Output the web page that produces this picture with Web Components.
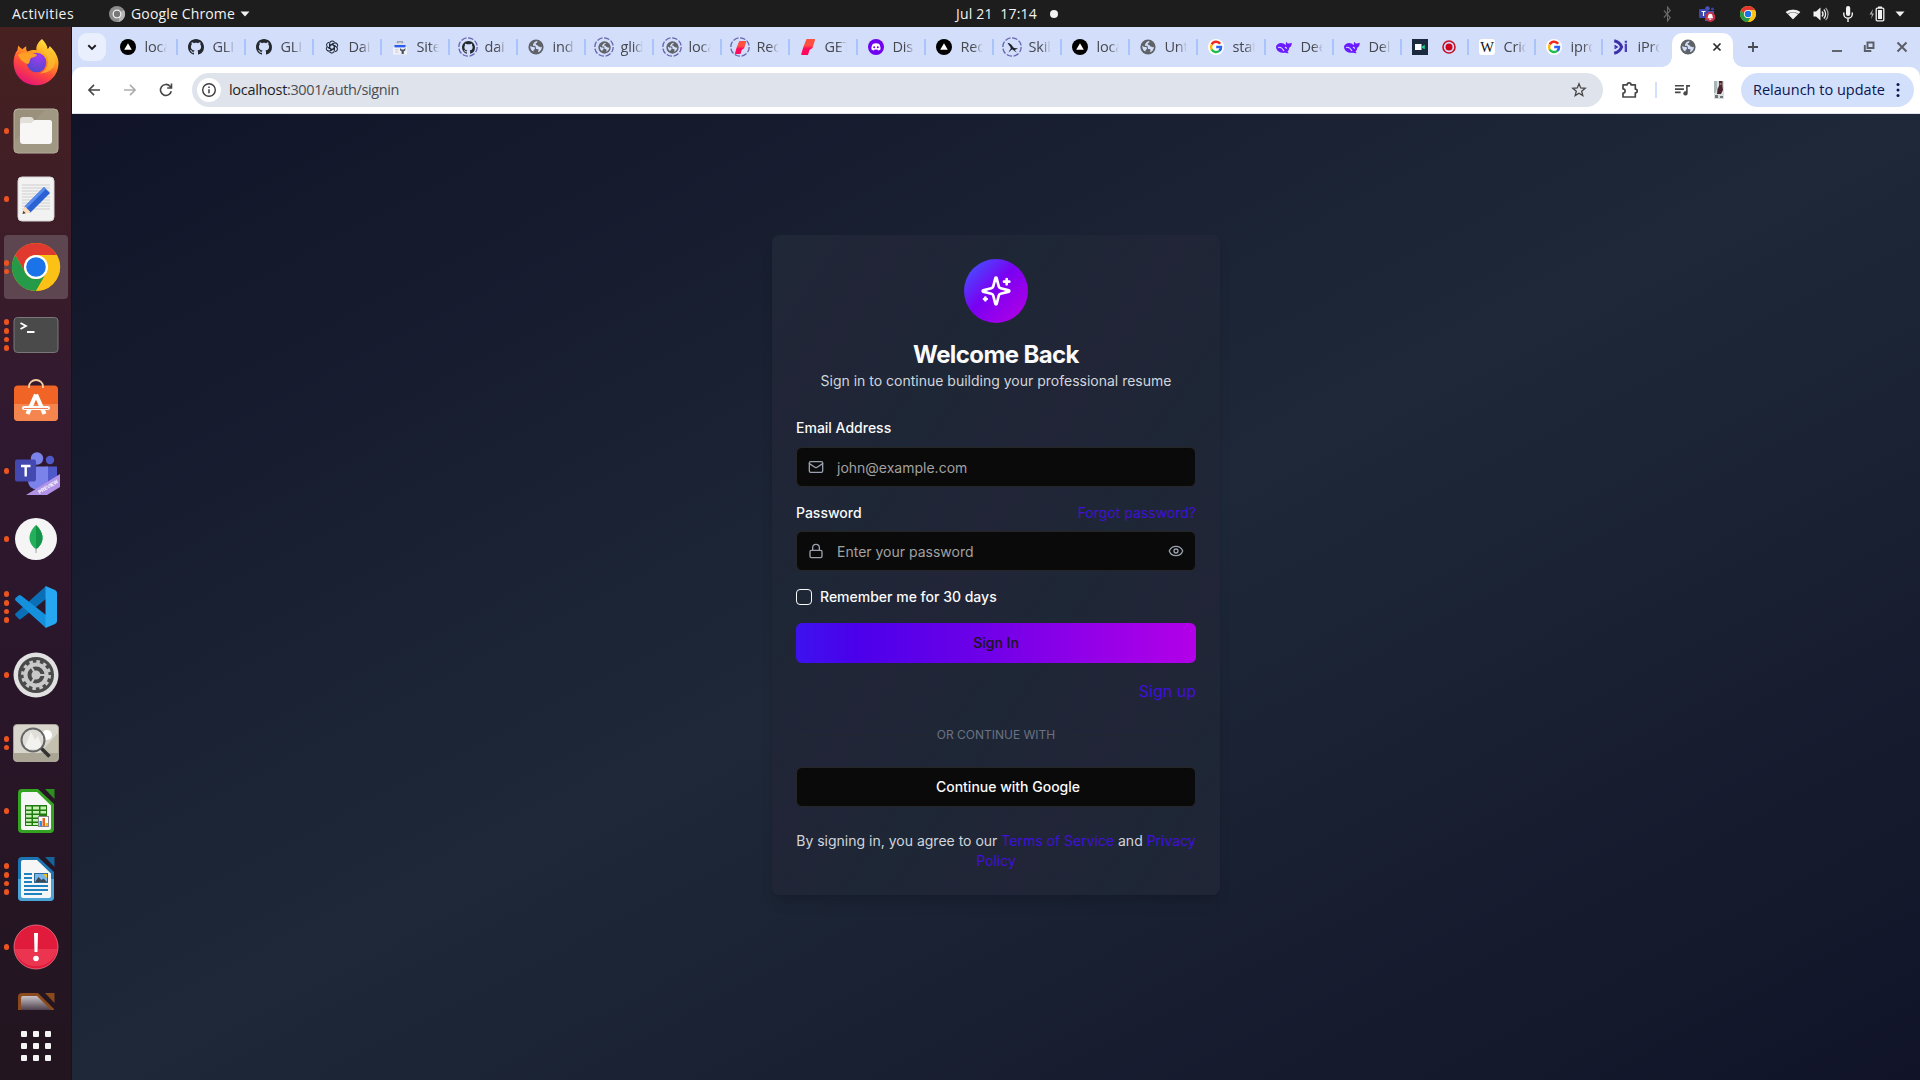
<!DOCTYPE html>
<html lang="en">
<head>
<meta charset="utf-8">
<title>Sign in</title>
<style>
html,body{margin:0;padding:0;width:1920px;height:1080px;overflow:hidden;background:#1d1d1d}
body{font-family:"Open Sans","Noto Sans",sans-serif}
</style>
</head>
<body>
<desk-top></desk-top>
<script>
const ICONS = {
  // --- browser favicons ---
  vercel:['0 0 16 16','<circle cx="8" cy="8" r="8" fill="#000"/><path d="M8 4.2 11.8 10.8H4.2Z" fill="#fff"/>'],
  github:['0 0 16 16','<path fill="#24292f" d="M8 0C3.58 0 0 3.58 0 8c0 3.54 2.29 6.53 5.47 7.59.4.07.55-.17.55-.38 0-.19-.01-.82-.01-1.49-2.01.37-2.53-.49-2.69-.94-.09-.23-.48-.94-.82-1.13-.28-.15-.68-.52-.01-.53.63-.01 1.08.58 1.23.82.72 1.21 1.87.87 2.33.66.07-.52.28-.87.51-1.07-1.78-.2-3.64-.89-3.64-3.95 0-.87.31-1.59.82-2.15-.08-.2-.36-1.02.08-2.12 0 0 .67-.21 2.2.82.64-.18 1.32-.27 2-.27s1.36.09 2 .27c1.53-1.04 2.2-.82 2.2-.82.44 1.1.16 1.92.08 2.12.51.56.82 1.27.82 2.15 0 3.07-1.87 3.75-3.65 3.95.29.25.54.73.54 1.48 0 1.07-.01 1.93-.01 2.2 0 .21.15.46.55.38A8.01 8.01 0 0 0 16 8c0-4.42-3.58-8-8-8Z"/>'],
  gpt:['0 0 16 16','<g fill="none" stroke="#222b38" stroke-width="1.15" transform="translate(8 8) scale(.9) translate(-8 -8)">'+[0,60,120,180,240,300].map(a=>`<path transform="rotate(${a} 8 8)" d="M5.4 9.6V4.2a2.9 2.9 0 0 1 5-2 2.9 2.9 0 0 1 .3.5M8 5.1l4.2 2.4"/>`).join('')+'</g>'],
  site:['0 0 16 16','<path d="M5.500 4V2.800h5V4" fill="none" stroke="#8a8f98" stroke-width="1.200"/><rect x="2" y="4" width="12" height="4" rx="1" fill="#d9dde5"/><rect x="1" y="8" width="14" height="7.500" fill="#f1f2f5"/><rect x="2.500" y="6" width="11" height="2.400" fill="#2f5cf0"/><path d="M8 9v2.200l1.600 1.200V15h2.200v-2.600l1.600-1.200V9l-1.600 1.500H9.600Z" fill="#4b5563"/><path d="M3 10.200h3.500v1H3zM3 12.500h3.500v1H3z" fill="#c6cbd5"/>'],
  globe:['0 0 16 16','<circle cx="8" cy="8" r="7.600" fill="#5f6368"/><path fill="#d3defb" d="M2.300 6.800c1.700 1.400 2.200 1.300 3.900 1.300.9.5.8 1.400.6 2.100-.9.400-1.400 1-1.300 2.200C3.500 11.900 2 9.500 2.300 6.800ZM9.400 2c.1 1.200-.3 2-1.600 2.300-.5.9.1 1.700 1.300 1.600.9.500 1 1.700 2.200 1.600.6 1 1.500.8 2.500.3.300 2.400-1.500 4.800-3.800 5.500-.2-.9.800-1.500.5-2.800-.900-.7-1.900-.3-2.500-1.100-.4-1.200.1-2-.900-2.500-.8-.3-1.400.3-2.200-.3C5 4.400 6.800 2.400 9.400 2Z"/>'],
  reddish:['0 0 16 16','<defs><linearGradient id="a" x2="0" y2="1"><stop offset=".4" stop-color="#ff4f40"/><stop offset=".6" stop-color="#ff0a5c"/></linearGradient></defs><path d="M6.500 0H14.300Q15.200 0 15 1L12.500 9 9.500 11 8 16H2Q1 16 1.200 15L3.500 7.500Z" fill="url(#a)"/>'],
  discord:['0 0 16 16','<circle cx="8" cy="8" r="8" fill="#7000f0"/><path fill="#fff" d="M5 4.800c2-.7 4-.7 6 0 1.200 1.800 1.700 3.500 1.500 5.600-.9.700-1.700 1-2.500 1.100l-.6-.9c-.9.200-1.900.2-2.800 0l-.6.900c-.9-.2-1.700-.5-2.500-1.100-.2-2.200.3-3.900 1.500-5.600Z"/><circle cx="6.200" cy="8.300" r="1" fill="#7000f0"/><circle cx="9.800" cy="8.300" r="1" fill="#7000f0"/>'],
  skill:['0 0 16 16','<path d="M2 2c4 1 6 4 6.500 5.500C10 9 12 9.500 14.500 8.500 13 11 10 11 7.500 10L3 14l3-5C5 6 3 5 2 2ZM9 9l4.500 5.500-6-4.500Z" fill="#1b1f2a"/>'],
  google:['0 0 16 16','<circle cx="8" cy="8" r="8" fill="#fff"/><g fill="none" stroke-width="2.500"><path d="M12.200 4.700A5 5 0 0 0 3.700 5.500" stroke="#f02b1d"/><path d="M3.700 5.500a5 5 0 0 0 0 5" stroke="#fbbc05"/><path d="M3.700 10.500a5 5 0 0 0 7.600 1.400" stroke="#1fbf4b"/><path d="M11.300 11.900A4.800 4.800 0 0 0 13 8H8.200" stroke="#2a62f5"/></g>'],
  whale:['0 0 16 16','<path fill="#6b1bff" d="M0 7.500C1 4.500 4.500 3 7.500 4.500c1.200.6 1.700 1.600 2.700 1.500-.6-1-.5-2.200.3-3.200.2 1.300 1 1.700 1.900 1.800 1.100.1 2.100-.3 3.300-.8.200 2.700-.8 4.300-2.500 5 0 1.700-.8 3.200-1.800 4l1.300 1.200c-1.400.4-2.500.1-3.300-.3C5 14.500 0 12.500 0 7.500Z"/><path d="M2 8.500c2-.8 4.500 1 6 3.500M9 8l2 1.500" stroke="#d3defb" stroke-width="1.100" fill="none"/>'],
  meet:['0 0 16 16','<rect width="16" height="16" fill="#1b2a3c"/><rect x="3" y="5" width="6.500" height="6" fill="#fff"/><path d="M10 7.500 12.800 5.800v4.400L10 9Z" fill="#1bd196"/>'],
  record:['0 0 16 16','<circle cx="8" cy="8" r="6" fill="none" stroke="#c8102a" stroke-width="1.600"/><circle cx="8" cy="8" r="3.500" fill="#d0021b"/>'],
  ipr:['0 0 16 16','<path d="M1.200 1.800C4.500 2.500 7.500 5 8.600 8 7.500 11 4.500 13.500 1.200 14.200" fill="none" stroke="#3c2fa8" stroke-width="3"/><path d="M1.500 6.500 4 8l-2.500 1.500" fill="none" stroke="#3c2fa8" stroke-width="1.500"/><path d="M11.700 4.800h2.300V13h-2.300zM11.700 1.800h2.300v2h-2.300z" fill="#4a3fc0"/>'],
  wiki:['0 0 16 16','<rect width="16" height="16" rx="3" fill="#fff"/><text x="8" y="13" text-anchor="middle" font-family="Liberation Serif" font-size="14.500" fill="#111">W</text>'],
  // --- browser controls ---
  chev:['0 0 12 12','<path d="M2.300 4.300 6 7.900l3.700-3.600" fill="none" stroke="#1b1b1f" stroke-width="1.900"/>'],
  back:['0 0 16 16','<path d="M14 8H3.200M8 2.900 2.900 8 8 13.100" fill="none" stroke="#474747" stroke-width="1.600"/>'],
  fwd:['0 0 16 16','<path d="M2 8H12.800M8 2.900 13.100 8 8 13.100" fill="none" stroke="#adadad" stroke-width="1.600"/>'],
  reload:['0 0 16 16','<path d="M13.300 9.200A5.500 5.500 0 1 1 12 4.200L13.300 5.600M13.500 1.600V6H9.200" fill="none" stroke="#474747" stroke-width="1.600"/>'],
  info:['0 0 16 16','<circle cx="8" cy="8" r="6.300" fill="none" stroke="#3c3c40" stroke-width="1.400"/><path d="M8 7.200v4M8 4.600V6" stroke="#3c3c40" stroke-width="1.500"/>'],
  star:['0 0 16 16','<path d="M8 1.800 9.700 6l4.500.3-3.500 2.900 1.100 4.400L8 11.200l-3.800 2.400 1.100-4.400L1.800 6.300 6.300 6Z" fill="none" stroke="#474747" stroke-width="1.300"/>'],
  puzzle:['0 0 18 18','<path d="M2 3.800h4.200a1.900 1.900 0 0 1 3.800 0h4.300v4.300a1.900 1.900 0 0 1 0 3.800V16H2v-4a2 2 0 0 0 0-4.200Z" fill="none" stroke="#474747" stroke-width="1.700" stroke-linejoin="round"/>'],
  queue:['0 0 18 18','<path d="M1 4h9.500M1 7.500h9.500M1 11h6" stroke="#474747" stroke-width="1.700"/><path d="M12.800 3.200H17v1.800h-2.500v7a2.300 2.300 0 1 1-1.700-2.200Z" fill="#474747"/>'],
  avatar:['0 0 10 18','<rect width="10" height="18" fill="#d9dfe0"/><path d="M5 0h3.500v5L9 9l-2 4H3l.5-5L5 5Z" fill="#4a2630"/><path d="M0 0h3v7L1.500 12H0Z" fill="#a9b6b8"/><path d="M1 14h3v3H1zM6 15h3v2H6z" fill="#72777a"/><path d="M5.500 2h2v2h-2z" fill="#a77267"/>'],
  dots:['0 0 4 16','<g fill="#0b1550"><circle cx="2" cy="2.500" r="1.500"/><circle cx="2" cy="8" r="1.500"/><circle cx="2" cy="13.500" r="1.500"/></g>'],
  x:['0 0 10 10','<path d="m1.500 1.500 7 7m0-7-7 7" stroke="#2a2a2e" stroke-width="1.700"/>'],
  plus:['0 0 12 12','<path d="M6 1v10M1 6h10" stroke="#474a50" stroke-width="1.800"/>'],
  min:['0 0 12 12','<path d="M1 10h10" stroke="#5a5e66" stroke-width="1.900"/>'],
  restore:['0 0 12 12','<path d="M4.500 1.500h6v5.500h-6zM1.800 4v6h6.500" fill="none" stroke="#5a5e66" stroke-width="1.900"/>'],
  close:['0 0 12 12','<path d="m1.500 1.500 9 9m0-9-9 9" stroke="#5a5e66" stroke-width="2"/>'],
  // --- system tray ---
  chromegray:['0 0 16 16','<circle cx="8" cy="8" r="8" fill="#8c8c8c"/><path d="M8 8 15 4a8 8 0 0 1-7 12Z" fill="#b5b5b5"/><circle cx="8" cy="8" r="3.800" fill="#777" stroke="#eee" stroke-width="1.300"/><path d="M9 12v3.500" stroke="#666"/>'],
  tri:['0 0 10 6','<path d="M.5.500h9L5 5.500Z" fill="#f2f2f2"/>'],
  dot:['0 0 8 8','<circle cx="4" cy="4" r="4" fill="#f2f2f2"/>'],
  bt:['0 0 10 16','<path d="m1 4.500 7 7L5 15V1l3 3.500-7 7" fill="none" stroke="#6a6a6a" stroke-width="1.200"/>'],
  tray:['0 0 16 16','<circle cx="8.500" cy="2.500" r="2.300" fill="#4b53bc"/><circle cx="13.500" cy="3" r="1.600" fill="#3940a5"/><path d="M6 5h9v6l-4 4H6Z" fill="#4b53bc"/><rect y="3" width="9" height="9" rx="1" fill="#3d46b0"/><path d="M2.500 5.500h4M4.500 5.500v4.500" stroke="#fff" stroke-width="1.200"/><circle cx="11.300" cy="11" r="5" fill="#c4314b"/><path d="M11.300 7.800c1.600 0 2.200 1 2.200 2.400l.6 2H8.500l.6-2c0-1.400.6-2.400 2.200-2.400Zm-1 5h2v.9h-2z" fill="#fff"/>'],
  chrome:['0 0 48 48','<circle cx="24" cy="24" r="24" fill="#fbbc04"/><path d="M3.200 12A24 24 0 0 1 44.800 12H24A12 12 0 0 0 13.600 30Z" fill="#e03a30"/><path d="M3.200 12 13.600 30A12 12 0 0 0 34.400 30L24 48A24 24 0 0 1 3.200 12Z" fill="#259a48"/><path d="M24 12H44.800A24 24 0 0 1 24 48L34.400 30Z" fill="#fbc116"/><circle cx="24" cy="24" r="12" fill="#fff"/><circle cx="24" cy="24" r="9.800" fill="#1a73e8"/>'],
  wifi:['0 0 16 14','<path d="M8 13.500.5 4.500a11.500 11.500 0 0 1 15 0Z" fill="#f2f2f2" opacity=".35"/><path d="M.8 4.800a11 11 0 0 1 14.400 0l-1.500 1.900a9 9 0 0 0-11.400 0ZM8 13.200l5-6a8 8 0 0 0-10 0Z" fill="#f2f2f2"/>'],
  sound:['0 0 16 16','<path d="M.5 5.500H3L7.500 1.500v13L3 10.500H.5Z" fill="#f2f2f2"/><path d="M9 5.500a3.800 3.800 0 0 1 0 5M10.800 3.500a6.500 6.500 0 0 1 0 9" fill="none" stroke="#f2f2f2" stroke-width="1.300"/><path d="M12.600 1.800a9 9 0 0 1 0 12.400" fill="none" stroke="#aaa" stroke-width="1.200"/>'],
  mic:['0 0 10 16','<rect x="3" y="0" width="4.200" height="10" rx="2.100" fill="#f2f2f2"/><path d="M.8 6.500V8a4.200 4.200 0 0 0 8.500 0V6.500M5 12.500V16" fill="none" stroke="#f2f2f2" stroke-width="1.400"/>'],
  batt:['0 0 16 16','<path d="m4 3-3.500 5.500H3L2 13l3-5.500H3Z" fill="#aaa"/><path d="M9 .5h4V2H9z" fill="#f2f2f2"/><rect x="7.200" y="2.200" width="7.600" height="12.600" rx="1" fill="none" stroke="#f2f2f2" stroke-width="1.300"/><path d="M9 4h4v9H9z" fill="#f2f2f2"/>'],
  // --- form ---
  sparkles:['0 0 24 24','<g fill="none" stroke="#fff" stroke-width="2" stroke-linecap="round" stroke-linejoin="round"><path d="M9.937 15.500A2 2 0 0 0 8.500 14.063l-6.135-1.582a.5.5 0 0 1 0-.962L8.500 9.936A2 2 0 0 0 9.937 8.500l1.582-6.135a.5.5 0 0 1 .963 0L14.063 8.500A2 2 0 0 0 15.500 9.937l6.135 1.581a.5.5 0 0 1 0 .964L15.500 14.063a2 2 0 0 0-1.437 1.437l-1.582 6.135a.5.5 0 0 1-.963 0z"/><path d="M20 3v4M22 5h-4M4 17v2M5 18H3"/></g>'],
  mail:['0 0 24 24','<g fill="none" stroke="#99a1af" stroke-width="2" stroke-linecap="round" stroke-linejoin="round"><rect width="20" height="16" x="2" y="4" rx="2"/><path d="m22 7-8.970 5.700a1.940 1.940 0 0 1-2.060 0L2 7"/></g>'],
  lock:['0 0 24 24','<g fill="none" stroke="#99a1af" stroke-width="2" stroke-linecap="round" stroke-linejoin="round"><rect width="18" height="11" x="3" y="11" rx="2"/><path d="M7 11V7a5 5 0 0 1 10 0v4"/></g>'],
  eye:['0 0 24 24','<g fill="none" stroke="#99a1af" stroke-width="2" stroke-linecap="round" stroke-linejoin="round"><path d="M2.062 12.348a1 1 0 0 1 0-.696 10.750 10.750 0 0 1 19.876 0 1 1 0 0 1 0 .696 10.750 10.750 0 0 1-19.876 0"/><circle cx="12" cy="12" r="3"/></g>'],
  // --- dock launchers, drawn on a 48px grid ---
  firefox:['0 1 48 48','<defs><linearGradient id="f" x1=".8" y1="0" x2=".3" y2="1"><stop offset="0" stop-color="#fff04a"/><stop offset=".35" stop-color="#ffa51e"/><stop offset=".65" stop-color="#ff4a3c"/><stop offset="1" stop-color="#e3127a"/></linearGradient><radialGradient id="g" cx=".6" cy=".2" r=".9"><stop offset="0" stop-color="#a03cf0"/><stop offset="1" stop-color="#4a49c8"/></radialGradient></defs><path d="M30 1c3 3 5.500 7 5.500 10 1-.5 2-2 2.200-3C43 13 46.500 19 46.500 25.500A22.400 22 0 0 1 1.600 25C1.400 20 3 15 5.500 12c0-1.500.3-3 1-4.500 1.200 2 2.500 3 4 3.700 1-1.200 2.500-2.200 3.800-3-.3 2.300 0 4 .8 5.300 3-1.500 7-2 9.500-1.200C23.500 9 26 4 30 1Z" fill="url(#f)"/><ellipse cx="24.500" cy="24.500" rx="9.800" ry="9.800" fill="url(#g)"/><path d="M6 17c4-3 9-3 13-2 2 .5 5 .5 6 2-1 2-4 2.500-6 3-2 3-1 5-3 6-4-1-8-4-10-9Z" fill="#ffa026"/><path d="M31 14c5 3 6 8 4.500 13-1 4-4 7-8 8.500 8 0 15-4 15.500-11.500 0-6-3-10-7-13-1 0-3.500.5-5 3Z" fill="#ffc02e" opacity=".7"/>'],
  files:['0 0 48 48','<rect x="2" y="2" width="44" height="44" rx="4" fill="#9a907c" stroke="#bdb5a2"/><path d="M2 34 34 2h8q4 0 4 4v36q0 4-4 4H6q-4 0-4-4Z" fill="#a79f8b" opacity=".6"/><path d="M8 13q0-3 3-3h8q2 0 3 3h15q3 0 3 3v8H8Z" fill="#e2dfd8"/><path d="M8 19q0-3 3-3h8l4-3h14q3 0 3 3v18q0 3-3 3H11q-3 0-3-3Z" fill="#f8f7f5"/>'],
  editor:['0 0 48 48','<rect x="6" y="2" width="36" height="44" rx="4" fill="#f2f2f2" stroke="#d6d6d6"/><path d="M10 10h28M10 13h28M10 16h28M10 19h28M10 22h28M10 25h28M10 28h28M10 31h28M10 34h28" stroke="#cfcfcf" stroke-width="1"/><path d="m12 32 6 6 20-20-6-6Z" fill="#2a62d4"/><path d="m12 32 20-20 2 2-20 20Z" fill="#5a8cf0"/><path d="m10.500 39 2-8 6.500 6.500Z" fill="#ffdcb8"/><path d="m10.500 39 .8-3.200 2.400 2.400Z" fill="#444"/>'],
  terminal:['0 0 48 48','<rect x="2" y="6.500" width="44" height="35" rx="3.500" fill="#4a4a4a" stroke="#787878"/><path d="m8.500 12 5.500 3-5.500 3M15 21h7.500" fill="none" stroke="#fff" stroke-width="1.800"/>'],
  software:['0 2 48 48','<rect x="2" y="8.500" width="44" height="35.500" rx="4" fill="#f06426"/><path d="M2 27h44v13q0 4-4 4H6q-4 0-4-4Z" fill="#f5854f"/><path d="M17 11V9.500a7 6.500 0 0 1 14 0V11" fill="none" stroke="#f3cfa0" stroke-width="1.800"/><path d="M24 17.500 15.500 37M24 17.500l8.500 19.500" stroke="#fff" stroke-width="4.200" fill="none"/><path d="M12 31h24" stroke="#fff" stroke-width="4" stroke-linecap="round"/><path d="M12 31.500h24" stroke="#e8632c" stroke-width=".8"/>'],
  teams:['0 0 48 48','<g transform="translate(0 3.500)"><circle cx="25" cy="8" r="6.200" fill="#7b83eb"/><circle cx="38" cy="9.500" r="4.200" fill="#5059c9"/><path d="M34 16h11v14q0 6-6 7h-5Z" fill="#5059c9"/><path d="M17 16h19v14q0 9-10 9T16 30Z" fill="#7b83eb"/><rect x="3" y="9" width="21" height="22" rx="2" fill="#4349b0"/><path d="M9 15.500h9.500M13.700 15.500V26" stroke="#fff" stroke-width="2.400"/></g><path d="M14 48 48 27v13L35 48Z" fill="#b292e6"/><text x="27.500" y="47" transform="rotate(-31 27.500 47)" font-family="Liberation Sans" font-weight="700" font-size="5.400" fill="#fff" textLength="22" lengthAdjust="spacingAndGlyphs">PREVIEW</text>'],
  mongo:['0 0 48 48','<circle cx="24" cy="24" r="21" fill="#f5f5f5"/><path d="M24 10c5 5 6.500 9 6.500 13 0 5-3 8.500-6.500 11.500C20.500 31.500 17.500 28 17.500 23c0-4 1.500-8 6.500-13Z" fill="#22b05a"/><path d="M24 10c5 5 6.500 9 6.500 13 0 5-3 8.500-6.500 11.500Z" fill="#16934a"/><path d="M24 33v5" stroke="#a5a5a0" stroke-width="1"/>'],
  vscode:['0 0 48 48','<path d="M34 3v13L9 36q-1.500 1-2.500-.5L3.500 32.500q-1-1 0-2Z" fill="#0b6fb8"/><path d="M34 45V32L9 12.500q-1.500-1-2.500 0L3.500 15q-1 1 0 2.500Z" fill="#1590dd"/><path d="M33.500 3 43 7q2 .8 2 3v28q0 2.200-2 3l-9.500 4Z" fill="#27a7f2"/>'],
  settings:['0 0 48 48','<circle cx="24" cy="24" r="22.500" fill="#e1e1e1"/><circle cx="24" cy="24" r="18" fill="#4a4a4a"/><circle cx="24" cy="24" r="13.500" fill="none" stroke="#c9c9c9" stroke-width="3" stroke-dasharray="3.500 3.570"/><circle cx="24" cy="24" r="10.500" fill="none" stroke="#c9c9c9" stroke-width="4"/><circle cx="24" cy="24" r="4.500" fill="#c9c9c9"/><path d="M24 24h10M24 24l-5-8.700M24 24l-5 8.700" stroke="#c9c9c9" stroke-width="2"/>'],
  viewer:['0 0 48 48','<rect x="1.500" y="5.500" width="45" height="37" rx="3.500" fill="#d8d6cc" stroke="#a8a498"/><path d="M2 34h44v5q0 3-3 3H5q-3 0-3-3Z" fill="#aaa594"/><path d="m28 34 18-20v20Z" fill="#c3c0b0"/><circle cx="35" cy="16" r="5" fill="#fff"/><path d="m12 30 7-17 4 8 3-4 5 13Z" fill="#f4f4f0"/><circle cx="21" cy="21" r="11.500" fill="#eee" fill-opacity=".35" stroke="#666" stroke-width="2"/><path d="m29.500 29.500 8 8" stroke="#333" stroke-width="3.500"/>'],
  calc:['0 0 48 48','<path d="M6 6q0-4 4-4h16L42 17v25q0 4-4 4H10q-4 0-4-4Z" fill="#33a321"/><path d="M9 7q0-2 2-2h14L39 18.500V41q0 2-2 2H11q-2 0-2-2Z" fill="#f6f6f6"/><path d="M33 2h9.500v10Z" fill="#2b8f1c"/><path d="M13 18h22v21H13z" fill="#1f7a12"/><path d="M14 19.500h5.500v3H14zM21 19.500h6v3h-6zM28.500 19.500h5.500v3h-5.500zM14 24h5.500v2.500H14zM21 24h6v2.500h-6zM28.500 24h5.500v2.500h-5.500zM14 28h5.500v2.500H14zM21 28h6v2.500h-6zM14 32h5.500v2.500H14zM21 32h6v2.500h-6zM14 36h5.500v2H14zM21 36h6v2h-6z" fill="#c5f0b0"/><rect x="26.500" y="29.500" width="10" height="10" fill="#fff" stroke="#888"/><path d="M27.500 34h2.500v5h-2.500z" fill="#2a90e0"/><path d="M30.500 31H33v8h-2.500z" fill="#e8641e"/><path d="M33.500 36H36v3h-2.500z" fill="#f0b820"/>'],
  writer:['0 0 48 48','<path d="M6 6q0-4 4-4h16L42 17v25q0 4-4 4H10q-4 0-4-4Z" fill="#1c74b0"/><path d="M6 24h36v18q0 4-4 4H10q-4 0-4-4Z" fill="#4ba3d6"/><path d="M9 7q0-2 2-2h14L39 18.500V41q0 2-2 2H11q-2 0-2-2Z" fill="#f6f6f6"/><path d="M33 2h9.500v10Z" fill="#146399"/><path d="M12 19h8M12 23h8M12 27h8M12 31h24M12 35h24M12 39h18" stroke="#1c82c0" stroke-width="1.800"/><rect x="22.500" y="18.500" width="13" height="9" fill="#78b6e8" stroke="#2b6a9b"/><path d="m23 27 3.500-5 3 3 2-1.500 3.500 3.500Z" fill="#3d4850"/><path d="M31 19h4v4Z" fill="#f5c211"/>'],
  alert:['0 0 48 48','<circle cx="24" cy="24" r="22" fill="#e01b3c" stroke="#f07888" stroke-width=".8"/><path d="M2.500 26h43A22 22 0 0 1 2.500 26Z" fill="#f04058" opacity=".7"/><path d="M22 10h4l-.5 19h-3Z" fill="#fff"/><circle cx="24" cy="35.500" r="2.800" fill="#fff"/>'],
  impress:['0 0 48 48','<defs><linearGradient id="i" x2="0" y2="1"><stop offset="0" stop-color="#c9c3c9"/><stop offset=".38" stop-color="#4a3c48"/></linearGradient></defs><path d="M6 6q0-4 4-4h16L42 18v25H6Z" fill="#8a4a1c"/><path d="M9 7q0-2 2-2h14L39 19v24H9Z" fill="url(#i)"/><path d="M33 2h9.500v10Z" fill="#8a4a1c"/>'],
  apps:['0 0 48 48','<g fill="#f4f4f4">'+[9,21,33].map(y=>[9,21,33].map(x=>`<rect x="${x}" y="${y}" width="6" height="6" rx="1"/>`).join('')).join('')+'</g>']
};

function define(name, html, after){
  customElements.define(name, class extends HTMLElement{
    connectedCallback(){
      if(this.shadowRoot) return;
      const root=this.attachShadow({mode:'open'});
      const t=document.createElement('template');
      t.innerHTML=typeof html==='function'?html(this):html;
      root.append(t.content.cloneNode(true));
      if(after) after(this,root);
    }
  });
}

// <ui-icon name w h>: an inline SVG from the table above
define('ui-icon', el=>{
  const [vb,body]=ICONS[el.getAttribute('name')];
  const w=el.getAttribute('w')||16,h=el.getAttribute('h')||w;
  return `<style>:host{display:block;flex:none;width:${w}px;height:${h}px}svg{display:block;overflow:visible}</style><svg width="${w}" height="${h}" viewBox="${vb}" preserveAspectRatio="none">${body}</svg>`;
});

// <fit-text w>: spaces its letters so that the line is w pixels wide
define('fit-text','<style>:host{display:block;flex:none;white-space:pre;text-align:left}span{display:inline-block}</style><span><slot></slot></span>',(el,root)=>{
  const w=+el.getAttribute('w'),s=root.querySelector('span');
  const n=el.textContent.length,now=s.getBoundingClientRect().width;
  s.style.letterSpacing=((w-now)/n)+'px';
  el.style.width=w+'px';
});

define('top-bar',`<style>
:host{display:flex;height:27px;background:#1d1d1d;color:#f2f2f2;font-size:14px;line-height:27px}
div{display:flex;align-items:center;box-sizing:border-box}
.l{width:956px;padding-left:12px}.l ui-icon{margin:0 6px 0 35px}.l ui-icon:last-child{margin:0 0 0 5px}
.c{gap:13px}.r{flex:1;justify-content:flex-end;padding-right:15px}
</style>
<div class="l"><fit-text w="62">Activities</fit-text><ui-icon name="chromegray"></ui-icon><fit-text w="104">Google Chrome</fit-text><ui-icon name="tri" w="10" h="6"></ui-icon></div>
<div class="c"><fit-text w="81">Jul 21  17:14</fit-text><ui-icon name="dot" w="8"></ui-icon></div>
<div class="r"><ui-icon name="bt" w="9" h="16" style="margin-right:27px"></ui-icon><ui-icon name="tray" style="margin-right:25px"></ui-icon><ui-icon name="chrome" style="margin-right:29px"></ui-icon><ui-icon name="wifi" w="16" h="12" style="margin-right:12px"></ui-icon><ui-icon name="sound" style="margin-right:14px"></ui-icon><ui-icon name="mic" w="10" h="16" style="margin-right:16px"></ui-icon><ui-icon name="batt" style="margin-right:10px"></ui-icon><ui-icon name="tri" w="10" h="6"></ui-icon></div>`);

define('dock-item',el=>{
  const n=+el.getAttribute('dots')||0;
  return `<style>:host{display:flex;flex:none;height:68px;width:72px;position:relative;align-items:center}
  .d{width:10px;display:flex;flex-direction:column;gap:3px;align-items:center;flex:none;z-index:1;padding-left:3px;box-sizing:border-box;margin-right:2px}
  i{width:5.600px;height:5.600px;border-radius:50%;background:#e95420}
  .hl{position:absolute;left:4px;top:2px;width:64px;height:64px;border-radius:4px;background:#5d4650}
  ui-icon{z-index:1}</style>${el.hasAttribute('active')?'<div class="hl"></div>':''}<div class="d">${'<i></i>'.repeat(n)}</div><ui-icon name="${el.getAttribute('icon')}" w="48"></ui-icon>`;
});
define('app-dock',()=>`<style>:host{display:flex;flex-direction:column;width:72px;height:1053px;background:linear-gradient(#472120,#3d1d28 20%,#301930 37%,#2a162a 60%,#22151f);box-shadow:inset -1px 0 #1c1016}
.list{display:flex;flex:none;flex-direction:column;height:983px;overflow:hidden;padding-top:2px;box-sizing:border-box}
.apps{padding:12px 12px 0}</style><div class="list">${
[['firefox',0],['files',1],['editor',1],['chrome',2,'active'],['terminal',4],['software',0],['teams',1],['mongo',1],['vscode',4],['settings',1],['viewer',2],['calc',1],['writer',4],['alert',1],['impress',0]].map(([i,d,a])=>`<dock-item icon="${i}" dots="${d}" ${a||''}></dock-item>`).join('')}</div><div class="apps"><ui-icon name="apps" w="48"></ui-icon></div>`);

define('browser-tab',el=>{
  const ring=el.hasAttribute('ring'),w=el.getAttribute('w')||68;
  return `<style>:host{display:flex;flex:none;box-sizing:border-box;width:${w}px;height:28px;align-items:center;font-size:14.500px;letter-spacing:-.2px;color:#46484e}
  .ic{width:20px;height:20px;margin-left:8px;flex:none;display:flex;align-items:center;justify-content:center;position:relative}
  .ring{position:absolute;inset:0}
  .t{margin-left:6.500px;width:22px;overflow:hidden;white-space:nowrap;flex:none;line-height:22px;-webkit-mask-image:linear-gradient(90deg,#000 55%,transparent);mask-image:linear-gradient(90deg,#000 55%,transparent)}
  .s{margin-left:auto;width:2px;height:16px;background:#a8c4fb}</style>
  <div class="ic"><ui-icon name="${el.getAttribute('icon')}" w="${ring?13:16}"></ui-icon>${ring?'<svg class="ring" width="20" height="20"><circle cx="10" cy="10" r="9.200" fill="none" stroke="#6664b0" stroke-width="1.300" stroke-dasharray="5.500 1.700"/></svg>':''}</div>
  ${el.hasAttribute('rec')?'<ui-icon name="record" style="margin-left:11px"></ui-icon>':'<div class="t"><slot></slot></div>'}
  ${el.hasAttribute('last')?'':'<div class="s"></div>'}`;
});
const TABS=[['vercel','loca'],['github','GLI'],['github','GLI'],['gpt','Dai'],['site','Site'],['github','dai','ring'],['globe','ind'],['globe','glid','ring'],['globe','loca','ring'],['reddish','Rec','ring'],['reddish','GET'],['discord','Dis'],['vercel','Rec'],['skill','Skil','ring'],['vercel','loca'],['globe','Unt'],['google','stat'],['whale','Dee'],['whale','Del'],['meet','','rec w="67"'],['wiki','Cric','w="67"'],['google','ipro','w="67"'],['ipr','iPro','w="67" last']];

define('tab-strip',()=>`<style>:host{display:flex;height:40px;background:#d3defb;align-items:flex-start}
.row{display:flex;align-items:center;padding-top:6px;height:28px}
.dd{width:28px;height:28px;border-radius:9px;background:#e9effd;margin:0 4px 0 6px;display:flex;align-items:center;justify-content:center}
.act{display:flex;width:61px;height:34px;margin:6px 0 0 2px;background:#fff;border-radius:10px 10px 0 0;position:relative;box-sizing:border-box;padding:6px 0 0 8px;gap:16px}
.act::before,.act::after{content:"";position:absolute;bottom:0;width:10px;height:10px}
.act::before{left:-10px;background:radial-gradient(circle at 0 0,transparent 9.500px,#fff 10px)}
.act::after{right:-10px;background:radial-gradient(circle at 100% 0,transparent 9.500px,#fff 10px)}
</style><div class="row"><div class="dd"><ui-icon name="chev" w="12"></ui-icon></div>${TABS.map(([i,t,a])=>`<browser-tab icon="${i}" ${a||''}>${t}</browser-tab>`).join('')}</div>
<div class="act"><ui-icon name="globe"></ui-icon><ui-icon name="x" w="10" style="margin-top:3px"></ui-icon></div>
<div class="row"><ui-icon name="plus" w="12" style="margin-left:14px"></ui-icon><ui-icon name="min" w="12" style="margin-left:72px"></ui-icon><ui-icon name="restore" w="12" style="margin-left:20px"></ui-icon><ui-icon name="close" w="12" style="margin-left:21px"></ui-icon></div>`);

define('tool-bar',`<style>:host{display:flex;height:47px;background:#fff;border-bottom:1px solid #dfe3e8;box-sizing:border-box;align-items:center;border-radius:10px 10px 0 0;font-size:14.500px;padding-left:14px}
.omni{display:flex;align-items:center;width:1411px;height:34px;border-radius:17px;background:#dfe3eb;margin-left:18px;box-sizing:border-box;padding:0 16px 0 5px}
.i{width:24px;height:24px;border-radius:50%;background:#fff;display:flex;align-items:center;justify-content:center;margin-right:8px}
.omni ui-icon:last-child{margin-left:auto}.omni .i ui-icon{margin:0}
.u{display:flex;color:#4b4e54;padding-bottom:2px}
.sep{width:2px;height:16px;background:#d3e0fb;margin:0 17px 0 16px}
.re{margin-left:17px;width:173px;height:34px;border-radius:17px;background:#d3e0fc;display:flex;align-items:center;justify-content:space-between;padding:0 14px 0 12px;box-sizing:border-box;color:#0b1550}
.re fit-text{padding-bottom:2px}
</style><ui-icon name="back"></ui-icon><ui-icon name="fwd" style="margin-left:20px"></ui-icon><ui-icon name="reload" style="margin-left:20px"></ui-icon>
<div class="omni"><div class="i"><ui-icon name="info"></ui-icon></div><div class="u"><fit-text w="58" style="color:#1f1f1f">localhost</fit-text><fit-text w="112">:3001/auth/signin</fit-text></div><ui-icon name="star"></ui-icon></div>
<ui-icon name="puzzle" w="18" style="margin-left:18px"></ui-icon><div class="sep"></div><ui-icon name="queue" w="17"></ui-icon><ui-icon name="avatar" w="10" h="18" style="margin-left:23px"></ui-icon>
<div class="re"><fit-text w="132">Relaunch to update</fit-text><ui-icon name="dots" w="4" h="16"></ui-icon></div>`);

define('text-field',el=>`<style>:host{display:flex;height:40px;box-sizing:border-box;border:1px solid #262626;border-radius:6px;background:#0a0a0a;align-items:center;padding:0 11px;font-size:14px;color:#a1a1a1}
span{margin-left:13px;flex:1;line-height:20px;padding-top:1px}</style><ui-icon name="${el.getAttribute('icon')}"></ui-icon><span><slot></slot></span>${el.hasAttribute('eye')?'<ui-icon name="eye"></ui-icon>':''}`);
define('app-button',`<style>:host{display:flex;height:40px;box-sizing:border-box;border-radius:6px;align-items:center;justify-content:center;font-size:14px;font-weight:500;color:#171717;background:linear-gradient(90deg,#3d12ee,#4b00eb 15%,#6c00e8 45%,#9100e8 72%,#b300e8)}
:host([dark]){background:#0a0a0a;border:1px solid #262626;color:#fafafa;padding-left:24px}</style><slot></slot>`);
define('a-link','<style>:host{color:#4010d8}</style><slot></slot>');

define('signin-card',`<style>
:host{display:block;width:448px;height:660px;box-sizing:border-box;padding:24px;border-radius:8px;background:linear-gradient(to bottom right,#1f2837,#212537 14%,#1e2736 30%,#212537 46%,#1e2736 60%,#212537 76%,#1e2736 88%,#212537);box-shadow:0 10px 15px -3px rgba(0,0,0,.1),0 4px 6px -4px rgba(0,0,0,.1);font-family:Inter,sans-serif;font-size:14px;line-height:20px;color:#fafafa}
.logo{width:64px;height:64px;border-radius:50%;margin:0 auto 16px;background:linear-gradient(135deg,#4450ff 8%,#7a00f2 46%,#b000e6 92%);display:flex;align-items:center;justify-content:center}
h1{margin:0;font-size:24px;line-height:32px;font-weight:700;letter-spacing:-.6px;text-align:center}
.sub{text-align:center;color:#d1d5dc;margin-bottom:24px}
label{display:block;font-weight:500}
.row{display:flex;justify-content:space-between;margin:16px 0 8px}
.chk{display:flex;align-items:center;gap:8px;margin:16px 0;font-weight:500}
.box{width:16px;height:16px;box-sizing:border-box;border:1px solid #fafafa;border-radius:4px}
.up{text-align:right;font-size:16px;line-height:24px;margin:16px 0 24px}
.or{display:flex;align-items:center;gap:8px;font-size:12px;line-height:16px;color:#6a7282;margin-bottom:24px}
.or::before,.or::after{content:"";height:1px;flex:1;background:#232733}
.terms{margin-top:24px;text-align:center;color:#d1d5dc}
</style>
<div class="logo"><ui-icon name="sparkles" w="32"></ui-icon></div>
<h1>Welcome Back</h1><div class="sub">Sign in to continue building your professional resume</div>
<label style="line-height:24px;margin:0 0 8px;padding-top:1px;height:23px">Email Address</label><text-field icon="mail">john@example.com</text-field>
<div class="row"><label>Password</label><a-link>Forgot password?</a-link></div><text-field icon="lock" eye>Enter your password</text-field>
<div class="chk"><div class="box"></div>Remember me for 30 days</div>
<app-button>Sign In</app-button><div class="up"><a-link>Sign up</a-link></div>
<div class="or">OR CONTINUE WITH</div>
<app-button dark>Continue with Google</app-button>
<div class="terms">By signing in, you agree to our <a-link>Terms of Service</a-link> and <a-link>Privacy</a-link><br><a-link>Policy</a-link></div>`);

define('web-page',`<style>:host{display:flex;flex:1;justify-content:center;padding-top:121px;box-sizing:border-box;background:linear-gradient(to bottom right,#111428,#1e2838 50%,#111428)}</style><signin-card></signin-card>`);
define('desk-top',`<style>:host{display:block;width:1920px;height:1080px}.m{display:flex}.b{display:flex;flex-direction:column;width:1848px;height:1053px;background:#d3defb}</style>
<top-bar></top-bar><div class="m"><app-dock></app-dock><div class="b"><tab-strip></tab-strip><tool-bar></tool-bar><web-page></web-page></div></div>`);
</script>
</body>
</html>
